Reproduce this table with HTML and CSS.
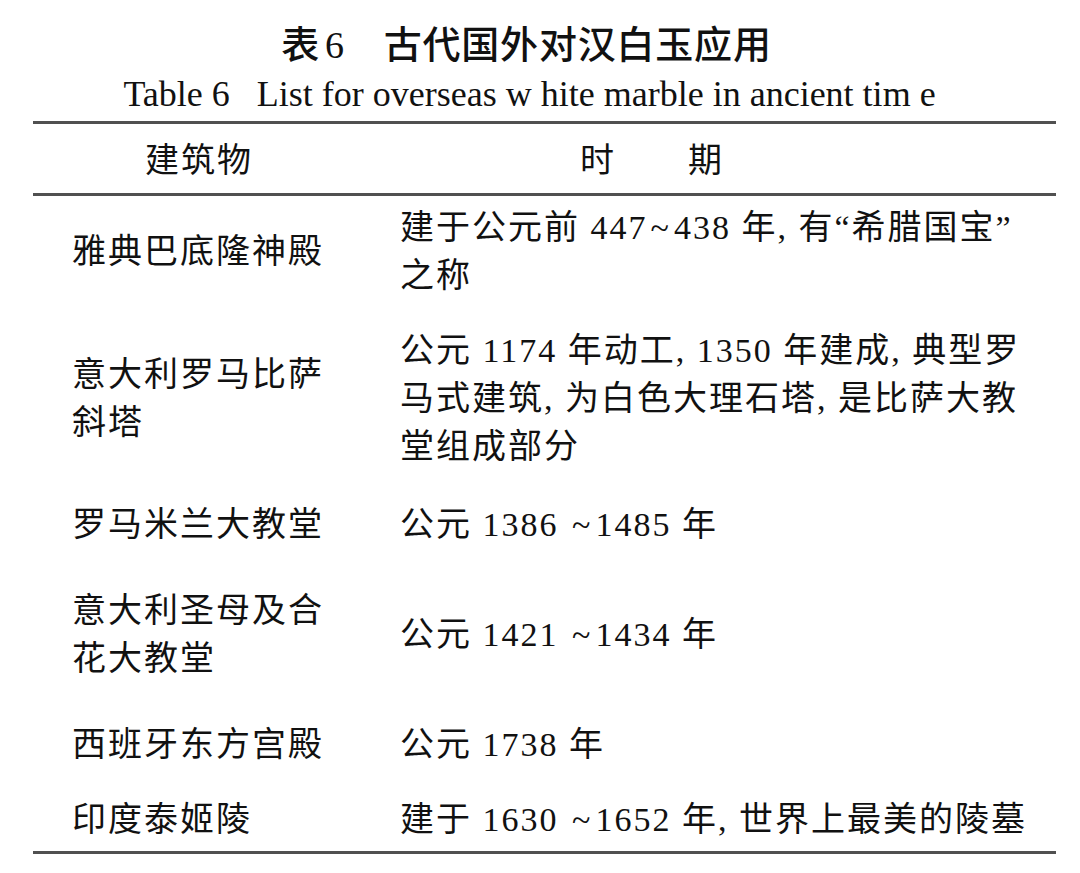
FILE: index.html
```html
<!DOCTYPE html>
<html lang="zh-CN">
<head>
<meta charset="utf-8">
<title>表6 古代国外对汉白玉应用</title>
<link rel="stylesheet" href="styles.css">
</head>
<body>
<div class="page">
  <h1 class="title">表<span class="num">6</span>　古代国外对汉白玉应用</h1>
  <p class="subtitle">Table 6 &nbsp;&nbsp;List for overseas w hite marble in ancient tim e</p>
  <table class="tbl">
    <colgroup>
      <col class="col-a">
      <col class="col-b">
    </colgroup>
    <thead>
      <tr>
        <th class="c1">建筑物</th>
        <th class="c2">时　　期</th>
      </tr>
    </thead>
    <tbody>
      <tr>
        <td class="c1">雅典巴底隆神殿</td>
        <td class="c2">建于公元前 447<span class="tilde">~</span>438 年, 有“希腊国宝”<br>之称</td>
      </tr>
      <tr>
        <td class="c1">意大利罗马比萨<br>斜塔</td>
        <td class="c2">公元 1174 年动工, 1350 年建成, 典型罗<br>马式建筑, 为白色大理石塔, 是比萨大教<br>堂组成部分</td>
      </tr>
      <tr>
        <td class="c1">罗马米兰大教堂</td>
        <td class="c2">公元 1386 <span class="tilde">~</span>1485 年</td>
      </tr>
      <tr>
        <td class="c1">意大利圣母及合<br>花大教堂</td>
        <td class="c2">公元 1421 <span class="tilde">~</span>1434 年</td>
      </tr>
      <tr>
        <td class="c1">西班牙东方宫殿</td>
        <td class="c2">公元 1738 年</td>
      </tr>
      <tr>
        <td class="c1">印度泰姬陵</td>
        <td class="c2">建于 1630 <span class="tilde">~</span>1652 年, 世界上最美的陵墓</td>
      </tr>
    </tbody>
  </table>
</div>
</body>
</html>
```
FILE: styles.css
```css
html, body {
  margin: 0;
  padding: 0;
  background: #ffffff;
}

.page {
  width: 1080px;
  padding-top: 20px;
  color: #111111;
  font-family: "Liberation Serif", "Noto Sans CJK SC", serif;
}

.title {
  margin: 0;
  padding-right: 27px;
  text-align: center;
  font-family: "Liberation Serif", "Noto Sans CJK SC", serif;
  font-size: 38px;
  line-height: 50px;
  font-weight: 500;
  letter-spacing: 0.8px;
}

.title .num {
  font-weight: 400;
  padding-left: 5px;
}

.subtitle {
  margin: 0;
  padding-right: 21px;
  text-align: center;
  font-size: 36px;
  line-height: 48px;
  letter-spacing: 0;
}

.tbl {
  margin: 3px 0 0 33px;
  width: 1023px;
  table-layout: fixed;
  border-collapse: collapse;
  border-top: 3px solid #505050;
  border-bottom: 3px solid #505050;
  font-size: 34px;
  line-height: 48px;
  letter-spacing: 2px;
}

.col-a {
  width: 367px;
}

.col-b {
  width: 656px;
}

.tbl thead tr {
  border-bottom: 3px solid #505050;
}

.tbl th {
  font-weight: 400;
  text-align: left;
  padding: 13px 0 8px 0;
}

.tbl th.c1 {
  padding-left: 112px;
}

.tbl th.c2 {
  padding-left: 180px;
}

.tbl td {
  vertical-align: middle;
  white-space: nowrap;
  padding: 0;
}

.tbl td.c1 {
  padding-left: 39px;
}

.tbl td.c2 {
  padding-left: 0;
}

.tilde {
  display: inline-block;
  margin: 0 3px;
}

.tbl tbody tr:nth-child(1) td { padding-top: 8px;  padding-bottom: 13px; }
.tbl tbody tr:nth-child(2) td { padding-top: 14px; padding-bottom: 15px; }
.tbl tbody tr:nth-child(3) td { padding-top: 15px; padding-bottom: 19px; }
.tbl tbody tr:nth-child(4) td { padding-top: 19px; padding-bottom: 19px; }
.tbl tbody tr:nth-child(5) td { padding-top: 19px; padding-bottom: 13px; }
.tbl tbody tr:nth-child(6) td { padding-top: 14px; padding-bottom: 7px; }
```
